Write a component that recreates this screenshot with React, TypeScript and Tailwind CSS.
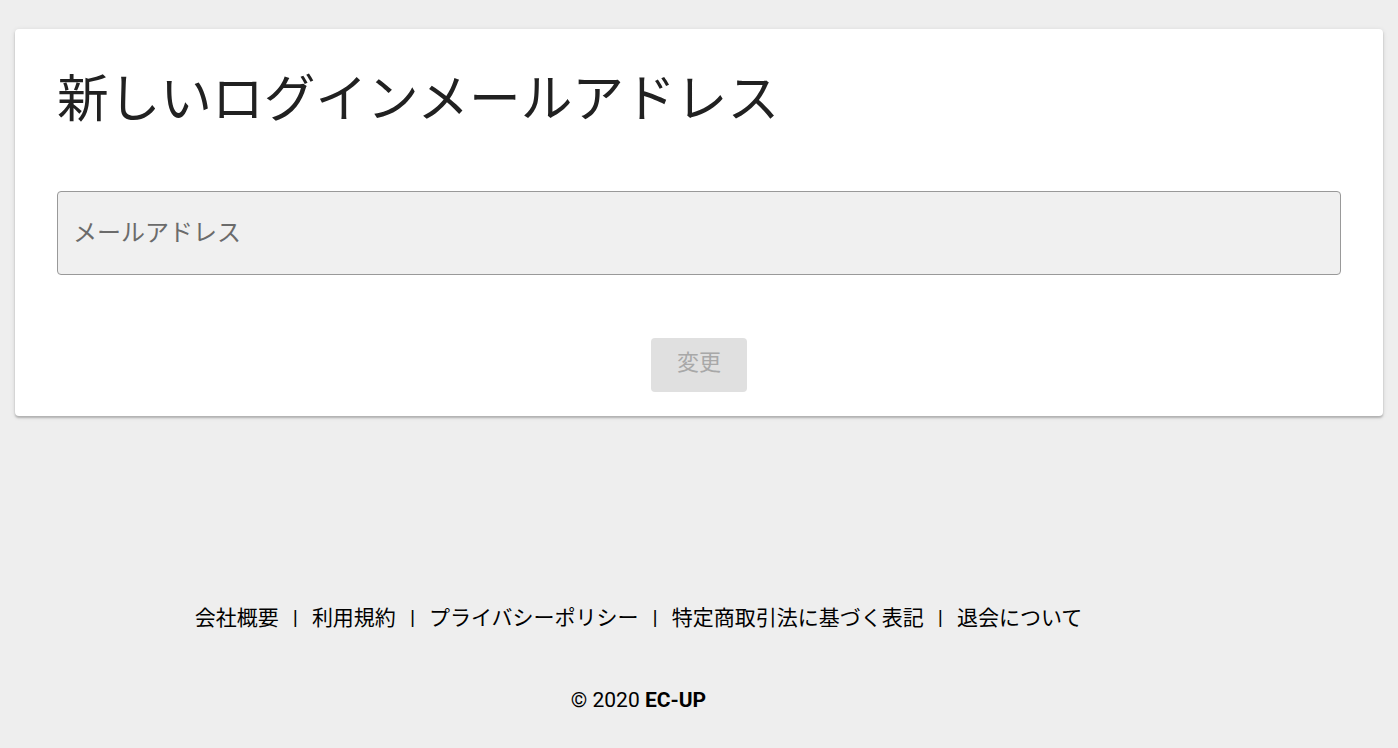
export default function App() {
  const links = ["会社概要", "利用規約", "プライバシーポリシー", "特定商取引法に基づく表記", "退会について"];

  return (
    <div
      className="min-h-[748px] bg-[#eeeeee] px-[15px] pt-[29px] text-[#212121]"
      style={{ fontFamily: 'Roboto, "Noto Sans CJK JP", sans-serif' }}
    >
      <div className="rounded-[4px] bg-white px-[42px] pt-10 pb-6 shadow-[0_2px_2px_rgba(0,0,0,0.2),0_1px_5px_rgba(0,0,0,0.12)]">
        <h1 className="text-[51.7px] leading-[61px] font-normal text-[#212121]">
          新しいログインメールアドレス
        </h1>
        <input
          type="email"
          placeholder="メールアドレス"
          className="mt-[61px] block h-[84px] w-full rounded-[4px] border border-[#999999] bg-[#f0f0f0] px-[15px] text-[24px] text-[#212121] outline-none placeholder:text-[#6b6b6b]"
        />
        <div className="mt-[63px] flex justify-center">
          <button
            disabled
            className="h-[54px] w-[96px] rounded-[4px] bg-[#e0e0e0] pb-[5px] text-[22px] text-[#a8a8a8]"
          >
            変更
          </button>
        </div>
      </div>

      <footer className="pr-[121px] pt-[187px] text-[21px] leading-[30px] text-black">
        <div className="flex justify-center">
          {links.map((l, i) => (
            <span key={l} className="flex">
              {i > 0 && <span className="px-[14px]">|</span>}
              <a href="#">{l}</a>
            </span>
          ))}
        </div>
        <p className="mt-[52px] text-center">
          © 2020 <span className="font-bold">EC-UP</span>
        </p>
      </footer>
    </div>
  );
}
